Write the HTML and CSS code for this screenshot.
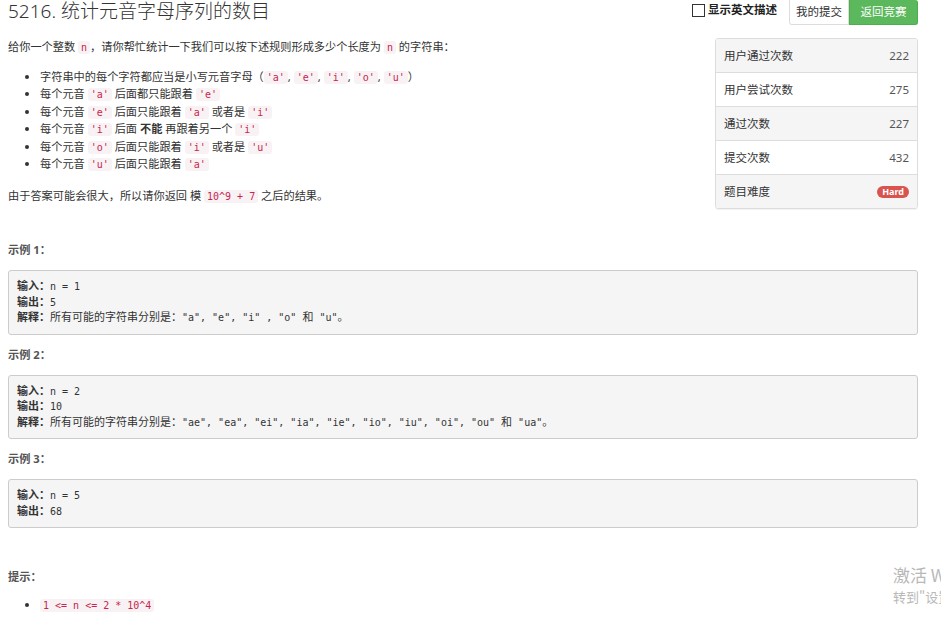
FILE: index.html
```html
<!DOCTYPE html>
<html lang="zh-CN">
<head>
<meta charset="utf-8">
<title>5216. 统计元音字母序列的数目</title>
<link rel="stylesheet" href="styles.css">
</head>
<body>
<div class="page">
  <header class="top">
    <h3 class="title">5216. 统计元音字母序列的数目</h3>
    <div class="actions">
      <label class="toggle"><span class="box"></span>显示英文描述</label>
      <div class="btn-group">
        <a class="btn">我的提交</a><a class="btn btn-green">返回竞赛</a>
      </div>
    </div>
  </header>

  <div class="main">
    <div class="desc">
      <p>给你一个整数 <code>n</code>，请你帮忙统计一下我们可以按下述规则形成多少个长度为 <code>n</code> 的字符串：</p>
      <ul>
        <li>字符串中的每个字符都应当是小写元音字母（<code>'a'</code>, <code>'e'</code>, <code>'i'</code>, <code>'o'</code>, <code>'u'</code>）</li>
        <li>每个元音 <code>'a'</code> 后面都只能跟着 <code>'e'</code></li>
        <li>每个元音 <code>'e'</code> 后面只能跟着 <code>'a'</code> 或者是 <code>'i'</code></li>
        <li>每个元音 <code>'i'</code> 后面 <strong>不能</strong> 再跟着另一个 <code>'i'</code></li>
        <li>每个元音 <code>'o'</code> 后面只能跟着 <code>'i'</code> 或者是 <code>'u'</code></li>
        <li>每个元音 <code>'u'</code> 后面只能跟着 <code>'a'</code></li>
      </ul>
      <p>由于答案可能会很大，所以请你返回 模 <code>10^9 + 7</code> 之后的结果。</p>
    </div>
    <aside class="stats">
      <div class="row"><span>用户通过次数</span><span class="num">222</span></div>
      <div class="row"><span>用户尝试次数</span><span class="num">275</span></div>
      <div class="row"><span>通过次数</span><span class="num">227</span></div>
      <div class="row"><span>提交次数</span><span class="num">432</span></div>
      <div class="row"><span>题目难度</span><span class="badge">Hard</span></div>
    </aside>
  </div>

  <section class="examples">
    <p class="label"><strong>示例 1：</strong></p>
    <pre><strong class="zh">输入：</strong>n = 1
<strong class="zh">输出：</strong>5
<strong class="zh">解释：</strong><span class="zh">所有可能的字符串分别是：</span>"a", "e", "i" , "o" <span class="zh">和</span> "u"<span class="zh">。</span></pre>
    <p class="label"><strong>示例 2：</strong></p>
    <pre><strong class="zh">输入：</strong>n = 2
<strong class="zh">输出：</strong>10
<strong class="zh">解释：</strong><span class="zh">所有可能的字符串分别是：</span>"ae", "ea", "ei", "ia", "ie", "io", "iu", "oi", "ou" <span class="zh">和</span> "ua"<span class="zh">。</span></pre>
    <p class="label"><strong>示例 3：</strong></p>
    <pre><strong class="zh">输入：</strong>n = 5
<strong class="zh">输出：</strong>68</pre>
    <p class="label hint"><strong>提示：</strong></p>
    <ul class="hint-list">
      <li><code>1 &lt;= n &lt;= 2 * 10^4</code></li>
    </ul>
  </section>
</div>
<div class="watermark">
  <div class="wm1">激活 Windows</div>
  <div class="wm2">转到"设置"以激活 Windows。</div>
</div>
</body>
</html>
```

FILE: styles.css
```css
html, body {
  margin: 0;
  padding: 0;
  background: #fff;
}
body {
  font-family: "Noto Sans", "Noto Sans CJK SC", sans-serif;
  font-size: 11.2px;
  line-height: 17.5px;
  color: #333;
  overflow: hidden;
  height: 625px;
}
.page {
  padding: 0 23px 0 8px;
}
.top {
  display: flex;
  justify-content: space-between;
  align-items: flex-start;
  height: 38px;
}
.title {
  margin: 0;
  font-size: 19px;
  line-height: 23px;
  font-weight: 300;
  color: #333;
}
.actions {
  display: flex;
  align-items: flex-start;
  gap: 12px;
}
.toggle {
  display: flex;
  align-items: center;
  gap: 3px;
  font-weight: bold;
  color: #222;
  margin-top: 1px;
  font-size: 11.5px;
  line-height: 18px;
}
.box {
  width: 11px;
  height: 11px;
  border: 1px solid #333;
  background: #fff;
  display: inline-block;
}
.btn-group {
  display: flex;
}
.btn {
  display: block;
  height: 25px;
  line-height: 24px;
  box-sizing: border-box;
  padding: 0;
  border: 1px solid #ddd;
  border-top: 0;
  background: #fff;
  color: #333;
  font-size: 11.5px;
  border-radius: 0 0 0 3px;
  width: 60px;
  text-align: center;
  white-space: nowrap;
}
.btn-green {
  background: #5cb85c;
  border-color: #4cae4c;
  color: #fff;
  border-radius: 0 3px 3px 0;
  width: 69px;
}
.main {
  display: flex;
  align-items: flex-start;
  gap: 15px;
}
.desc {
  flex: 1;
}
.desc p {
  margin: 0 0 12px;
}
.desc p:last-child {
  margin-bottom: 0;
}
.desc ul {
  margin: 0 0 14px;
  padding-left: 32px;
}
code {
  font-family: "DejaVu Sans Mono", monospace;
  font-size: 10px;
  line-height: 1;
  color: #c7254e;
  background: #f9f2f4;
  padding: 1px 3px;
  border-radius: 3px;
}
.stats {
  width: 203px;
  box-sizing: border-box;
  border: 1px solid #ddd;
  border-radius: 3px;
  box-shadow: 0 1px 1px rgba(0,0,0,0.05);
  overflow: hidden;
}
.row {
  display: flex;
  justify-content: space-between;
  align-items: center;
  height: 33px;
  padding: 0 8px;
  border-top: 1px solid #ddd;
  background: #fff;
  font-size: 11.5px;
}
.row:first-child {
  border-top: 0;
}
.row:nth-child(odd) {
  background: #f5f5f5;
}
.num {
  color: #555;
}
.badge {
  background: #d9534f;
  color: #fff;
  font-weight: bold;
  font-size: 9px;
  line-height: 12px;
  padding: 0 5px;
  border-radius: 7px;
}
.examples {
  margin-top: 32px;
}
.label {
  margin: 0 0 11.5px;
}
.label strong {
  font-weight: bold;
  color: #555;
}
pre {
  margin: 0 0 11px;
  padding: 8px;
  border: 1px solid #ccc;
  border-radius: 3px;
  background: #f5f5f5;
  font-family: "DejaVu Sans Mono", monospace;
  font-size: 10px;
  line-height: 15.5px;
  color: #333;
  white-space: pre;
}
.zh {
  font-family: "Noto Sans CJK SC", sans-serif;
  font-size: 11px;
  line-height: 1;
}
.hint {
  margin-top: 40px;
  margin-bottom: 10px;
}
.hint-list {
  margin: 0;
  padding-left: 32px;
}
.watermark {
  position: absolute;
  left: 893px;
  top: 563px;
  color: #b8b8b8;
  white-space: nowrap;
  font-family: "Noto Sans CJK SC", sans-serif;
}
.wm1 {
  font-size: 17px;
  line-height: 24px;
}
.wm2 {
  font-size: 13px;
  line-height: 20px;
}
```
